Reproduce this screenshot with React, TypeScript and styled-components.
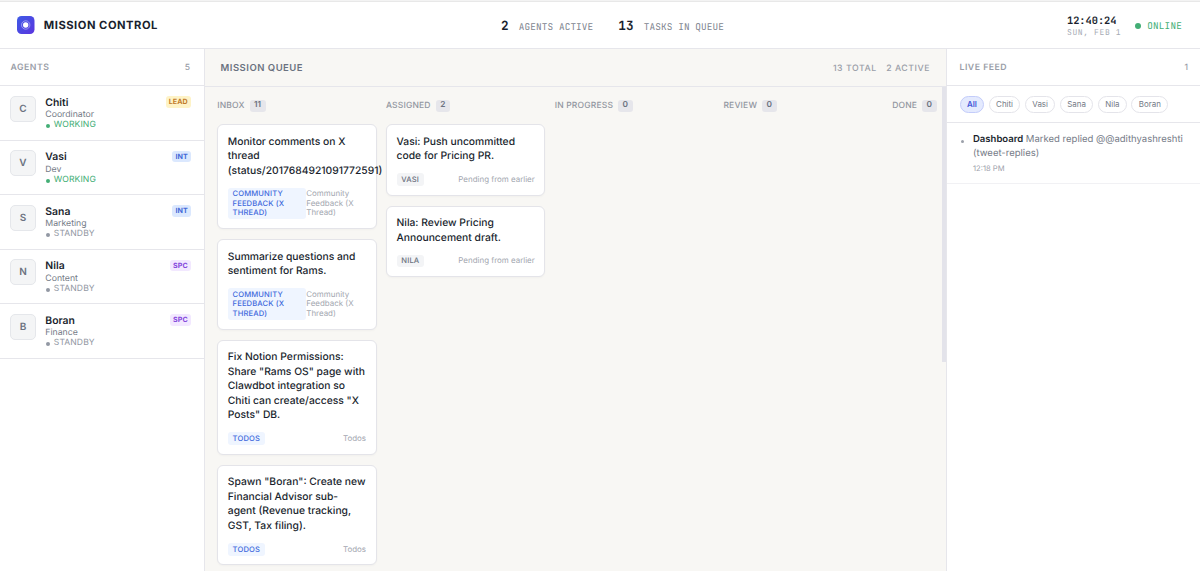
import React from 'react';
import styled, { createGlobalStyle } from 'styled-components';

const GlobalStyle = createGlobalStyle`
  *, *::before, *::after { box-sizing: border-box; }
  html, body { margin: 0; padding: 0; background: #fff; overflow: hidden; }
  body {
    font-family: Inter, 'Liberation Sans', sans-serif;
    color: #1a1f2e;
    -webkit-font-smoothing: antialiased;
    text-rendering: geometricPrecision;
  }
`;

const mono = "'JetBrains Mono', 'DejaVu Sans Mono', monospace";
const line = '#e6e6eb';

const Page = styled.div`
  height: 571px;
  display: flex;
  flex-direction: column;
  border-top: 1px solid #f3f3f3;
`;

const Header = styled.header`
  flex: 0 0 48px;
  display: flex;
  justify-content: space-between;
  align-items: center;
  padding: 0 18px 0 16.5px;
  border-top: 1px solid #e8e8e8;
  border-bottom: 1px solid ${line};
`;

const Brand = styled.div`
  display: flex;
  align-items: center;
  gap: 9.3px;
  font-size: 11.2px;
  font-weight: 700;
  letter-spacing: 0.52px;
  line-height: 18px;
`;

const Stats = styled.div`
  display: flex;
  gap: 25px;
  font-family: ${mono};
`;

const Stat = styled.div`
  display: flex;
  align-items: baseline;
  gap: 10.3px;
`;

const StatValue = styled.span`
  font-size: 12.7px;
  font-weight: 700;
`;

const StatLabel = styled.span`
  font-size: 9.4px;
  letter-spacing: 0.1px;
  color: #80858f;
`;

const HeaderRight = styled.div`
  display: flex;
  justify-content: flex-end;
  align-items: center;
  gap: 13.5px;
  font-family: ${mono};
`;

const Clock = styled.div`
  font-size: 10.32px;
  font-weight: 700;
  line-height: 13px;
  padding-top: 2.5px;
`;

const DateText = styled.div`
  font-size: 8px;
  font-weight: 400;
  letter-spacing: 0.62px;
  line-height: 10px;
  color: #a6abb4;
`;

const Online = styled.div`
  display: flex;
  align-items: center;
  gap: 6.5px;
  padding-top: 1px;
  font-size: 9.3px;
  letter-spacing: 0.22px;
  color: #43ae75;
`;

const OnlineDot = styled.i`
  width: 6px;
  height: 6px;
  border-radius: 50%;
  background: #43ae75;
`;

const Body = styled.div`
  flex: 1;
  min-height: 0;
  display: grid;
  grid-template-columns: 205px 741px 254px;
`;

const Sidebar = styled.aside`
  border-right: 1px solid ${line};
`;

const PanelHeader = styled.div<{ $pad?: string }>`
  height: 37px;
  display: flex;
  align-items: center;
  justify-content: space-between;
  padding: ${(p) => p.$pad ?? '2px 14px 0 10.5px'};
  border-bottom: 1px solid ${line};
  font-size: 8.73px;
  font-weight: 600;
  letter-spacing: 0.5px;
  color: #9a9ea8;
`;

const Count = styled.span`
  font-size: 8.5px;
  font-weight: 500;
  letter-spacing: 0;
`;

const AgentRow = styled.div`
  height: 54.55px;
  display: flex;
  align-items: flex-start;
  padding: 9.5px 13px 0 10px;
  border-bottom: 1px solid ${line};
`;

const Avatar = styled.div`
  width: 26px;
  height: 26px;
  flex: none;
  display: grid;
  place-items: center;
  border: 1px solid #e5e7eb;
  border-radius: 5px;
  background: #f4f5f6;
  color: #6b7280;
  font-size: 10px;
  font-weight: 600;
`;

const AgentInfo = styled.div`
  flex: 1;
  margin-left: 9.3px;
`;

const AgentName = styled.div`
  font-size: 10.4px;
  font-weight: 600;
  line-height: 13px;
`;

const AgentRole = styled.div`
  padding-top: 0.8px;
  font-size: 8.73px;
  line-height: 12px;
  color: #757b87;
`;

const AgentState = styled.div<{ $working: boolean }>`
  display: flex;
  align-items: center;
  gap: 3.5px;
  padding-left: 1px;
  font-size: 8.6px;
  line-height: 9.5px;
  letter-spacing: 0.08px;
  color: ${(p) => (p.$working ? '#43ae75' : '#9298a3')};

  &::before {
    content: '';
    width: 4px;
    height: 4px;
    border-radius: 50%;
    background: currentColor;
  }
`;

const rolePalette = {
  LEAD: ['#fef3c7', '#c27c2c'],
  INT: ['#dbe8fe', '#4468d8'],
  SPC: ['#f2e8ff', '#8447dc'],
};

const RoleBadge = styled.span<{ $kind: keyof typeof rolePalette }>`
  margin-top: 0.5px;
  padding: 0 3.2px;
  border-radius: 3px;
  font-size: 7.1px;
  font-weight: 700;
  line-height: 11.5px;
  letter-spacing: 0.08px;
  background: ${(p) => rolePalette[p.$kind][0]};
  color: ${(p) => rolePalette[p.$kind][1]};
`;

const Main = styled.main`
  display: flex;
  flex-direction: column;
  min-width: 0;
  min-height: 0;
  background: #f8f7f4;
`;

const QueueHeader = styled.div`
  flex: 0 0 38px;
  display: flex;
  align-items: center;
  justify-content: space-between;
  padding: 2px 16px 0 15.5px;
  border-bottom: 1px solid ${line};
  font-size: 9.5px;
  font-weight: 600;
  letter-spacing: 0.5px;
  color: #6b7280;
`;

const Totals = styled.div`
  display: flex;
  gap: 9.5px;
  font-size: 8.73px;
  font-weight: 500;
  letter-spacing: 0.55px;
  color: #9a9ea8;
`;

const BoardWrap = styled.div`
  flex: 1;
  min-height: 0;
  display: flex;
  overflow: hidden;
`;

const Board = styled.div`
  flex: 1;
  min-width: 0;
  overflow: hidden;
  display: grid;
  grid-template-columns: repeat(5, 159.4px);
  gap: 9.35px;
  padding: 13px 0 0 12.2px;
`;

const ScrollThumb = styled.div`
  width: 4.5px;
  height: 275px;
  background: #e3e3ea;
`;

const Column = styled.section`
  display: flex;
  flex-direction: column;
  gap: 10px;
`;

const ColumnHeader = styled.div`
  display: flex;
  align-items: center;
  gap: 5px;
  height: 11.5px;
  margin-bottom: 2.5px;
  font-size: 8.5px;
  font-weight: 500;
  line-height: 12px;
  letter-spacing: 0.18px;
  color: #9296a0;
`;

const ColumnCount = styled.span`
  padding: 0 4.5px;
  border-radius: 3px;
  background: #e6e6eb;
  color: #6b7280;
  font-size: 8.3px;
  font-weight: 600;
  line-height: 11.5px;
  letter-spacing: 0;
`;

const Card = styled.article`
  flex: none;
  padding: 9.7px 9.6px 8.8px;
  border: 1px solid #e4e4e9;
  border-radius: 6px;
  background: #fff;
  box-shadow: 0 1px 2px rgba(0, 0, 0, 0.03);
`;

const CardTitle = styled.div`
  margin-bottom: 9.6px;
  font-size: 10.32px;
  font-weight: 500;
  line-height: 14.5px;
`;

const CardFooter = styled.div`
  display: flex;
  justify-content: space-between;
  align-items: center;
`;

const Tag = styled.span<{ $muted?: boolean; $long?: boolean }>`
  flex: none;
  width: ${(p) => (p.$long ? '78.5px' : 'auto')};
  padding: 1.5px 4.8px;
  border-radius: 3px;
  background: ${(p) => (p.$muted ? '#f3f4f6' : '#eff5ff')};
  color: ${(p) => (p.$muted ? '#6b7280' : '#4169dc')};
  font-size: 7.6px;
  font-weight: 500;
  line-height: 9.5px;
  letter-spacing: 0.13px;
`;

const Note = styled.span`
  font-size: 7.94px;
  line-height: 9.5px;
  color: #a3a7b0;
`;

const Feed = styled.aside`
  border-left: 1px solid ${line};
`;

const Filters = styled.div`
  height: 37.4px;
  display: flex;
  align-items: center;
  gap: 4.5px;
  padding: 0.6px 0 0 12.5px;
  border-bottom: 1px solid ${line};
`;

const Filter = styled.button<{ $active?: boolean }>`
  height: 17.5px;
  padding: 0 6.4px;
  border: 1px solid ${(p) => (p.$active ? '#c3ccfa' : '#e4e4ea')};
  border-radius: 9px;
  background: ${(p) => (p.$active ? '#e4eafe' : '#fff')};
  color: ${(p) => (p.$active ? '#4558d8' : '#747a86')};
  font: ${(p) => (p.$active ? 600 : 400)} 7.94px Inter, sans-serif;
`;

const FeedItem = styled.div`
  display: flex;
  height: 60.5px;
  padding: 10px 12px 0 14px;
  border-bottom: 1px solid #f1f1f4;
`;

const Bullet = styled.i`
  flex: none;
  width: 3px;
  height: 3px;
  margin: 6.5px 9px 0 0;
  border-radius: 50%;
  background: #9ca0aa;
`;

const FeedText = styled.div`
  font-size: 9.52px;
  line-height: 13.5px;
  color: #757b87;
  white-space: nowrap;

  b { font-weight: 600; color: #1a1f2e; }
`;

const FeedTime = styled.div`
  margin-top: 3.3px;
  font-size: 7.6px;
  line-height: 10px;
  color: #9ca0aa;
`;

const Logo = () => (
  <svg width="18" height="18" viewBox="0 0 18 18">
    <defs>
      <linearGradient id="brand" x1="0" y1="0" x2="1" y2="1">
        <stop offset="0" stopColor="#3d5be6" />
        <stop offset="1" stopColor="#5b35df" />
      </linearGradient>
    </defs>
    <rect width="17.5" height="18" rx="4.5" fill="url(#brand)" />
    <circle cx="8.7" cy="9" r="4.2" fill="none" stroke="#fff" strokeOpacity="0.45" strokeWidth="0.9" />
    <circle cx="8.7" cy="9" r="2.7" fill="#fff" />
  </svg>
);

type Agent = { name: string; role: string; working: boolean; kind: keyof typeof rolePalette };

const agents: Agent[] = [
  { name: 'Chiti', role: 'Coordinator', working: true, kind: 'LEAD' },
  { name: 'Vasi', role: 'Dev', working: true, kind: 'INT' },
  { name: 'Sana', role: 'Marketing', working: false, kind: 'INT' },
  { name: 'Nila', role: 'Content', working: false, kind: 'SPC' },
  { name: 'Boran', role: 'Finance', working: false, kind: 'SPC' },
];

type Task = { title: string[]; tag: string; note: string; muted?: boolean; long?: boolean };

const columns: { name: string; count: number; tasks: Task[] }[] = [
  {
    name: 'INBOX',
    count: 11,
    tasks: [
      { title: ['Monitor comments on X', 'thread', '(status/2017684921091772591)'], tag: 'COMMUNITY FEEDBACK (X THREAD)', note: 'Community Feedback (X Thread)', long: true },
      { title: ['Summarize questions and', 'sentiment for Rams.'], tag: 'COMMUNITY FEEDBACK (X THREAD)', note: 'Community Feedback (X Thread)', long: true },
      { title: ['Fix Notion Permissions:', 'Share "Rams OS" page with', 'Clawdbot integration so', 'Chiti can create/access "X', 'Posts" DB.'], tag: 'TODOS', note: 'Todos' },
      { title: ['Spawn "Boran": Create new', 'Financial Advisor sub-', 'agent (Revenue tracking,', 'GST, Tax filing).'], tag: 'TODOS', note: 'Todos' },
    ],
  },
  {
    name: 'ASSIGNED',
    count: 2,
    tasks: [
      { title: ['Vasi: Push uncommitted', 'code for Pricing PR.'], tag: 'VASI', note: 'Pending from earlier', muted: true },
      { title: ['Nila: Review Pricing', 'Announcement draft.'], tag: 'NILA', note: 'Pending from earlier', muted: true },
    ],
  },
  { name: 'IN PROGRESS', count: 0, tasks: [] },
  { name: 'REVIEW', count: 0, tasks: [] },
  { name: 'DONE', count: 0, tasks: [] },
];

const TitleLine = styled.div`
  white-space: nowrap;
`;

export default function App() {
  return (
    <Page>
      <GlobalStyle />
      <Header>
        <Brand>
          <Logo />
          MISSION CONTROL
        </Brand>
        <Stats>
          <Stat>
            <StatValue>2</StatValue>
            <StatLabel>AGENTS ACTIVE</StatLabel>
          </Stat>
          <Stat>
            <StatValue>13</StatValue>
            <StatLabel>TASKS IN QUEUE</StatLabel>
          </Stat>
        </Stats>
        <HeaderRight>
          <Clock>
            12:40:24
            <DateText>SUN, FEB 1</DateText>
          </Clock>
          <Online>
            <OnlineDot />
            ONLINE
          </Online>
        </HeaderRight>
      </Header>
      <Body>
        <Sidebar>
          <PanelHeader>
            AGENTS <Count>5</Count>
          </PanelHeader>
          {agents.map((a) => (
            <AgentRow key={a.name}>
              <Avatar>{a.name[0]}</Avatar>
              <AgentInfo>
                <AgentName>{a.name}</AgentName>
                <AgentRole>{a.role}</AgentRole>
                <AgentState $working={a.working}>{a.working ? 'WORKING' : 'STANDBY'}</AgentState>
              </AgentInfo>
              <RoleBadge $kind={a.kind}>{a.kind}</RoleBadge>
            </AgentRow>
          ))}
        </Sidebar>
        <Main>
          <QueueHeader>
            MISSION QUEUE
            <Totals>
              <span>13 TOTAL</span>
              <span>2 ACTIVE</span>
            </Totals>
          </QueueHeader>
          <BoardWrap>
            <Board>
              {columns.map((c) => (
                <Column key={c.name}>
                  <ColumnHeader>
                    {c.name}
                    <ColumnCount>{c.count}</ColumnCount>
                  </ColumnHeader>
                  {c.tasks.map((t) => (
                    <Card key={t.title[0]}>
                      <CardTitle>
                        {t.title.map((l) => (
                          <TitleLine key={l}>{l}</TitleLine>
                        ))}
                      </CardTitle>
                      <CardFooter>
                        <Tag $muted={t.muted} $long={t.long}>{t.tag}</Tag>
                        <Note>{t.note}</Note>
                      </CardFooter>
                    </Card>
                  ))}
                </Column>
              ))}
            </Board>
            <ScrollThumb />
          </BoardWrap>
        </Main>
        <Feed>
          <PanelHeader $pad="2px 12px 0 12.5px">
            LIVE FEED <Count>1</Count>
          </PanelHeader>
          <Filters>
            {['All', 'Chiti', 'Vasi', 'Sana', 'Nila', 'Boran'].map((f, i) => (
              <Filter key={f} $active={i === 0}>{f}</Filter>
            ))}
          </Filters>
          <FeedItem>
            <Bullet />
            <div>
              <FeedText>
                <b>Dashboard</b> Marked replied @@adithyashreshti
                <br />
                (tweet-replies)
              </FeedText>
              <FeedTime>12:18 PM</FeedTime>
            </div>
          </FeedItem>
        </Feed>
      </Body>
    </Page>
  );
}
